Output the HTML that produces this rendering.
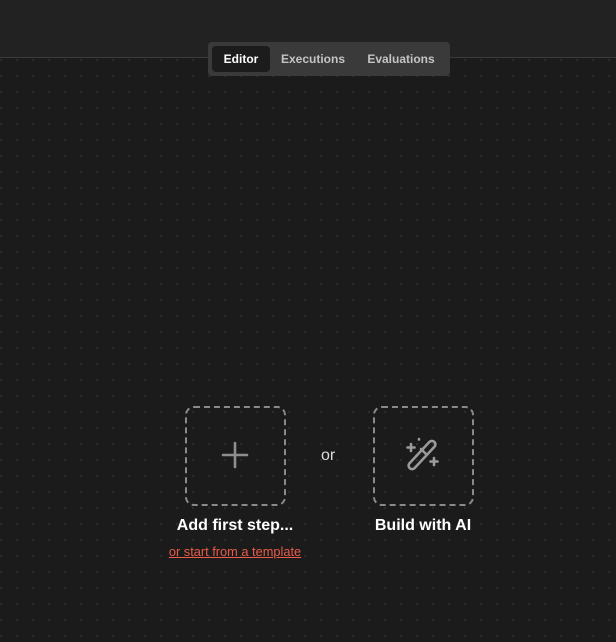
<!DOCTYPE html>
<html><head><style>
*{margin:0;padding:0;box-sizing:border-box}
body{width:616px;height:642px;overflow:hidden;background:#1b1b1b;font-family:"Liberation Sans",sans-serif;position:relative}
.canvas{position:absolute;left:0;top:59px;width:616px;height:583px;background-color:#1b1b1b;background-image:radial-gradient(circle at 1px 1px,#2e2e2e 1px,transparent 1.2px);background-size:16px 16px;background-position:0 0}
.header{position:absolute;left:0;top:0;width:616px;height:58px;background:#222;border-bottom:1px solid #3a3a3a}
.tabs{position:absolute;left:208px;top:42px;width:242px;height:34px;background:#3a3a3a;border-radius:4px;font-size:12px;font-weight:bold;color:#c4c4c4}
.tab{position:absolute;top:4px;height:26px;line-height:26px;border-radius:4px;text-align:center}
.tab.on{background:#1c1c1c;color:#fff}
.box{position:absolute;width:101px;height:100px;border:2px dashed #8a8a8a;border-radius:9px}
.lbl{position:absolute;color:#fff;font-size:16px;font-weight:bold;text-align:center;width:200px}
</style></head><body>
<div class="header"></div>
<div class="canvas"></div>
<div class="tabs"><div class="tab on" style="left:4px;width:58px">Editor</div><div class="tab" style="left:70px;width:70px">Executions</div><div class="tab" style="left:156px;width:74px">Evaluations</div></div>
<div class="box" style="left:185px;top:406px"></div>
<svg style="position:absolute;left:220px;top:440px" width="30" height="30" viewBox="0 0 30 30"><path d="M15 3v24M3 15h24" stroke="#8e8e8e" stroke-width="2.6" stroke-linecap="round"/></svg>
<div style="position:absolute;left:321px;top:447px;color:#ddd;font-size:16px">or</div>
<div class="box" style="left:373px;top:406px"></div>
<svg style="position:absolute;left:400px;top:434px" width="44" height="42" viewBox="0 0 44 42" fill="none" stroke="#9a9a9a" stroke-width="2.6" stroke-linecap="round" stroke-linejoin="round">
<rect x="-3.5" y="-18" width="7" height="36" rx="3.5" transform="translate(22 21) rotate(43)"/>
<path d="M21 15l5.5 5.5"/>
<path d="M11 10v7M7.5 13.5h7"/>
<path d="M34 24v7M30.5 27.5h7"/>
<path d="M19 5v0.5"/>
</svg>
<div class="lbl" style="left:135px;top:517px">Add first step...</div>
<div class="lbl" style="left:323px;top:517px">Build with AI</div>
<div style="position:absolute;left:135px;top:544px;width:200px;text-align:center;font-size:12.8px;color:#ea5b4a;text-decoration:underline">or start from a template</div>
</body></html>
